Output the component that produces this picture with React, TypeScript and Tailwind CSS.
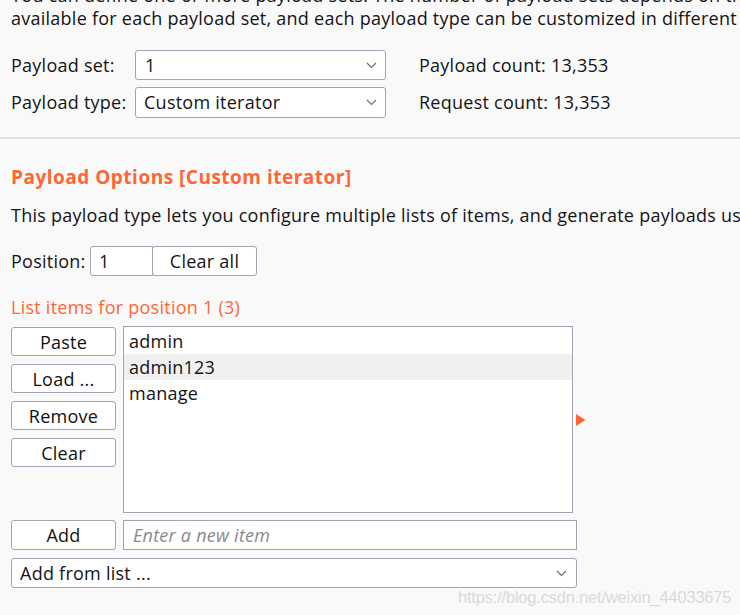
import React from "react";

const Chevron = () => (
  <svg width="11" height="7" viewBox="0 0 11 7" className="shrink-0">
    <path d="M1 1 L5.5 5.5 L10 1" fill="none" stroke="#6b6b6b" strokeWidth="1.1" />
  </svg>
);

const Btn = ({ label }: { label: string }) => (
  <button className="w-[105px] h-[29px] bg-white border border-[#a3a3b3] rounded-[3px] leading-none text-[#111] flex items-center justify-center">
    {label}
  </button>
);

export default function App() {
  return (
    <div className="relative w-[740px] h-[615px] overflow-hidden bg-[#f9f9fa] text-[18px] tracking-[0.25px] text-[#141414] font-['Open_Sans',sans-serif]">
      <div className="pl-[11px] mt-[-16px] leading-[23px] whitespace-nowrap">
        <div>You can define one or more payload sets. The number of payload sets depends on the attack type defined in the Positions tab.</div>
        <div>available for each payload set, and each payload type can be customized in different ways.</div>
      </div>

      <div className="pl-[11px] mt-[20px] flex flex-col gap-[7px]">
        <div className="flex items-center h-[30px]">
          <span className="w-[124px]">Payload set:</span>
          <div className="w-[251px] h-[30px] bg-white border border-[#a3a3b3] rounded-[3px] flex items-center justify-between pl-[9px] pr-[8px]">
            <span>1</span>
            <Chevron />
          </div>
          <span className="ml-[33px]">Payload count: 13,353</span>
        </div>
        <div className="flex items-center h-[31px]">
          <span className="w-[124px]">Payload type:</span>
          <div className="w-[251px] h-[31px] bg-white border border-[#a3a3b3] rounded-[3px] flex items-center justify-between pl-[8px] pr-[8px]">
            <span>Custom iterator</span>
            <Chevron />
          </div>
          <span className="ml-[33px]">Request count: 13,353</span>
        </div>
      </div>

      <div className="mt-[19px] h-[2px] bg-[#e1e1e3]" />

      <div className="pl-[11px]">
        <div className="mt-[25px] leading-[26px] text-[19px] tracking-[0.5px] font-bold text-[#ff6633]">Payload Options [Custom iterator]</div>
        <div className="mt-[12px] leading-[26px] whitespace-nowrap">
          This payload type lets you configure multiple lists of items, and generate payloads using all permutations of items in the lists.
        </div>

        <div className="mt-[18px] flex items-center h-[30px]">
          <span className="w-[79px]">Position:</span>
          <div className="w-[63px] h-[30px] bg-white border border-[#a3a3b3] rounded-l-[3px] flex items-center pl-[8px]">1</div>
          <button className="ml-[-1px] w-[105px] h-[30px] bg-white border border-[#a3a3b3] rounded-[3px] flex items-center justify-center">
            Clear all
          </button>
        </div>

        <div className="mt-[18px] leading-[26px] text-[#ff6633]">List items for position 1 (3)</div>

        <div className="mt-[6px] flex">
          <div className="pt-px flex flex-col gap-[8px]">
            <Btn label="Paste" />
            <Btn label="Load ..." />
            <Btn label="Remove" />
            <Btn label="Clear" />
          </div>
          <div className="ml-[7px] w-[450px] h-[187px] bg-white border border-[#a3a3b3] pt-px">
            <div className="h-[26px] leading-[26px] pl-[5px]">admin</div>
            <div className="h-[26px] leading-[26px] pl-[5px] bg-[#f0f0f1]">admin123</div>
            <div className="h-[26px] leading-[26px] pl-[5px]">manage</div>
          </div>
          <div className="self-center ml-[3px]">
            <svg width="10" height="12" viewBox="0 0 10 12">
              <path d="M0 0 L9.5 6 L0 12 Z" fill="#ff6633" />
            </svg>
          </div>
        </div>

        <div className="mt-[7px] flex">
          <button className="w-[105px] h-[30px] bg-white border border-[#a3a3b3] rounded-[3px] flex items-center justify-center">Add</button>
          <div className="ml-[7px] w-[454px] h-[30px] bg-white border border-[#a3a3b3] flex items-center pl-[9px] italic text-[#8a8a8a]">
            Enter a new item
          </div>
        </div>

        <div className="mt-[8px] w-[566px] h-[30px] bg-white border border-[#a3a3b3] rounded-[3px] flex items-center justify-between pl-[8px] pr-[9px]">
          <span>Add from list ...</span>
          <Chevron />
        </div>
      </div>

      <div className="absolute left-[458px] top-[586px] text-[16.5px] leading-[22px] text-[#d9d9d9] font-['Liberation_Sans',sans-serif] tracking-[-0.2px]">
        https://blog.csdn.net/weixin_44033675
      </div>
    </div>
  );
}
